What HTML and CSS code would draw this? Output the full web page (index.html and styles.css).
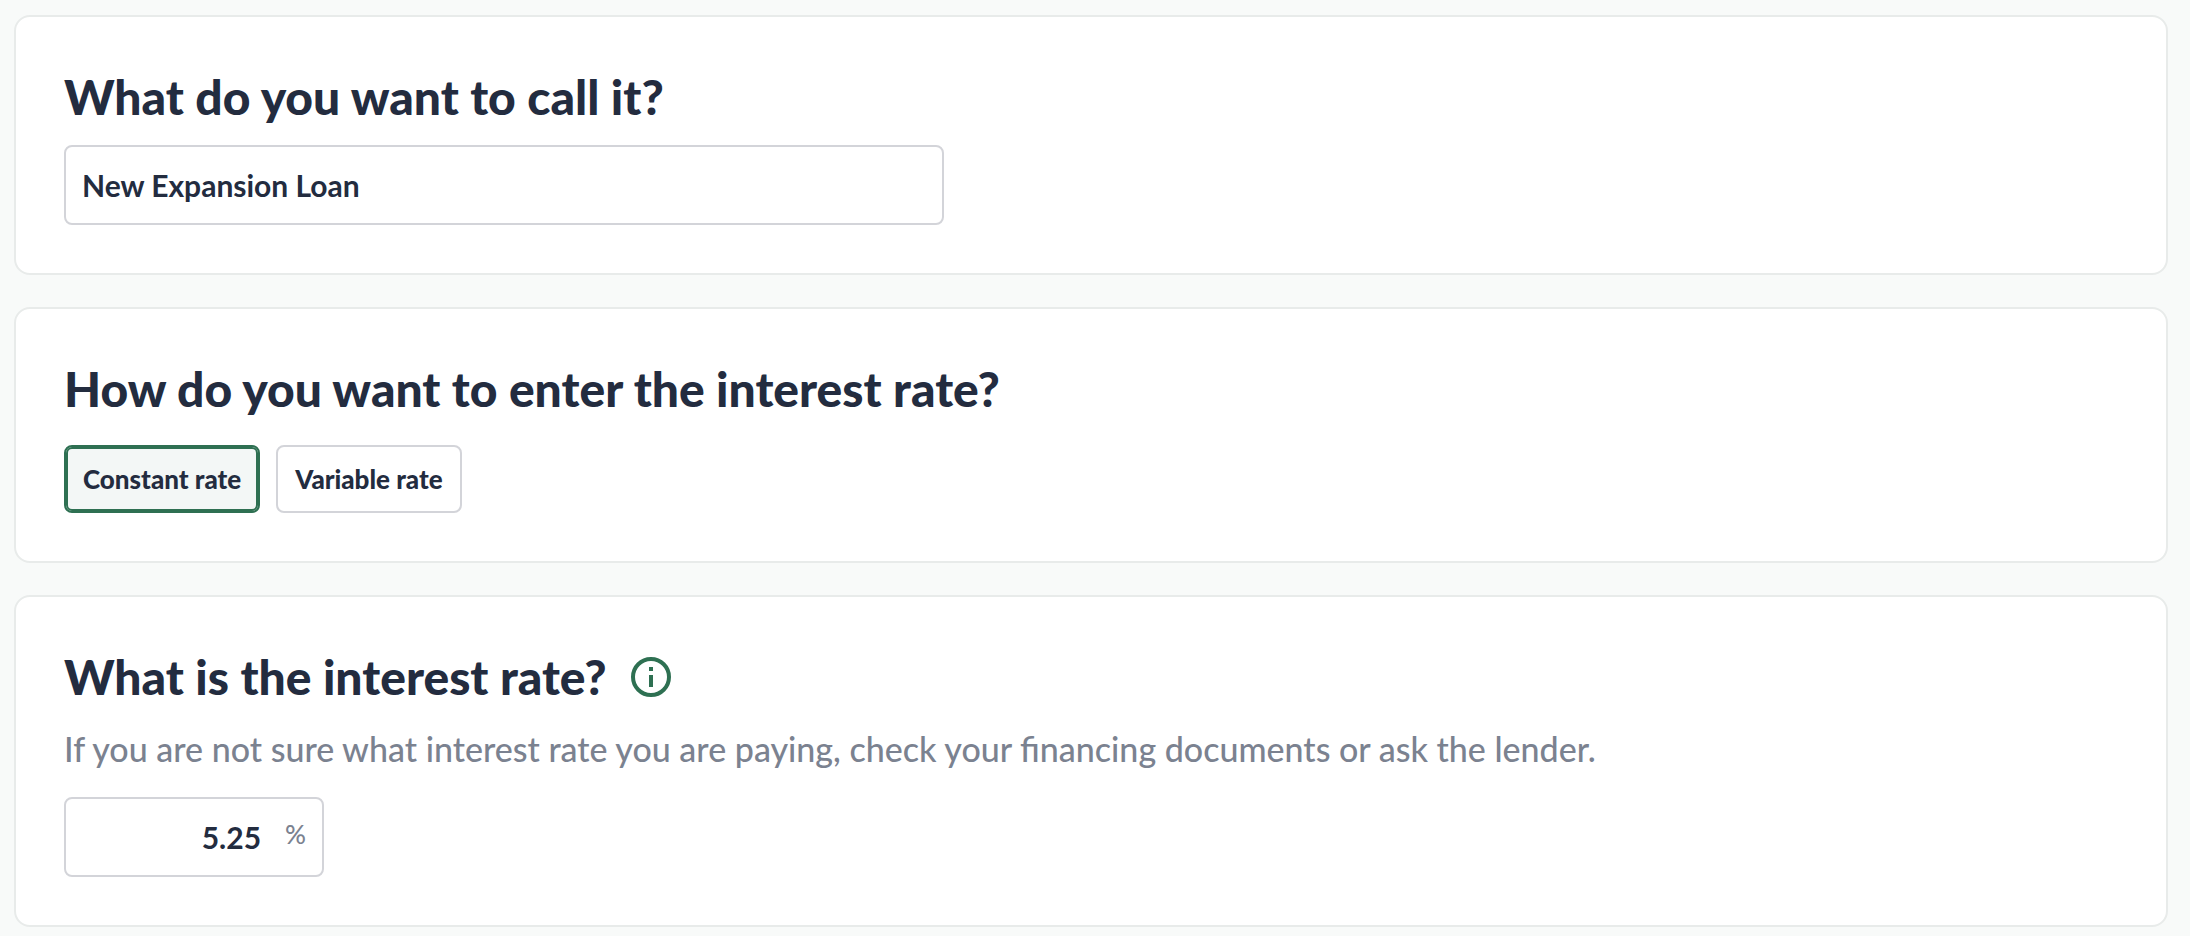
FILE: index.html
```html
<!DOCTYPE html>
<html lang="en">
<head>
  <meta charset="UTF-8">
  <title>New loan</title>
  <link rel="stylesheet" href="styles.css">
</head>
<body>
  <form class="questions">
    <section class="card">
      <h2><label for="loan_name">What do you want to call it?</label></h2>
      <input class="field name-field" id="loan_name" type="text" value="New Expansion Loan">
    </section>

    <section class="card">
      <h2 id="rate_type">How do you want to enter the interest rate?</h2>
      <div class="choices" role="group" aria-labelledby="rate_type">
        <button class="choice selected" type="button" aria-pressed="true">Constant rate</button>
        <button class="choice" type="button" aria-pressed="false">Variable rate</button>
      </div>
    </section>

    <section class="card">
      <div class="title-row">
        <h2><label for="rate">What is the interest rate?</label></h2>
        <button class="info" type="button" aria-label="More information">
          <svg viewBox="0 0 48 48" width="48" height="48" aria-hidden="true">
            <circle cx="24" cy="24" r="18" fill="none" stroke="currentColor" stroke-width="4"/>
            <path d="M22 14h4v4h-4zM22 22h4v12h-4z" fill="currentColor"/>
          </svg>
        </button>
      </div>
      <p class="hint" id="rate_hint">If you are not sure what interest rate you are paying, check your financing documents or ask the lender.</p>
      <div class="field rate-field">
        <input id="rate" type="text" inputmode="decimal" value="5.25" aria-describedby="rate_hint">
        <span class="unit">%</span>
      </div>
    </section>
  </form>
</body>
</html>
```
FILE: styles.css
```css
* {
  box-sizing: border-box;
}
body {
  margin: 0;
  background: #f8faf9;
  color: #232c3f;
  font-family: Lato, "Noto Sans", sans-serif;
}
.questions {
  display: flex;
  flex-direction: column;
  gap: 32px;
  padding: 15px 22px 9px 14px;
}
.card {
  padding: 48px;
  background: #fff;
  border: 2px solid #e8ebea;
  border-radius: 16px;
}
h2 {
  margin: 0 0 16px;
  font-size: 48px;
  line-height: 64px;
  font-weight: 900;
}
input,
button {
  font-family: inherit;
  color: inherit;
}

.field {
  display: block;
  width: 100%;
  height: 80px;
  padding: 0 16px;
  background: #fff;
  border: 2px solid #d3d4d9;
  border-radius: 8px;
  font-size: 30px;
  font-weight: 700;
}
.name-field {
  max-width: 880px;
}

.choices {
  display: flex;
  gap: 16px;
  margin-top: 24px;
}
.choice {
  height: 68px;
  padding: 0 17px;
  background: #fff;
  border: 2px solid #d3d4d9;
  border-radius: 8px;
  font-size: 26px;
  font-weight: 900;
}
.choice.selected {
  background: #f3f7f6;
  border-color: #2e7052;
  box-shadow: inset 0 0 0 2px #2e7052;
}

.title-row {
  display: flex;
  align-items: center;
  gap: 20px;
  margin-bottom: 16px;
}
.title-row h2 {
  margin: 0;
}
.info {
  display: flex;
  padding: 0;
  border: 0;
  background: none;
  color: #2e7052;
}
.hint {
  margin: 0 0 24px;
  color: #7b8290;
  font-size: 34px;
  line-height: 48px;
  font-weight: 500;
}
.rate-field {
  display: flex;
  align-items: center;
  gap: 24px;
  max-width: 260px;
}
.rate-field input {
  flex: 1;
  min-width: 0;
  padding: 0;
  border: 0;
  font-size: 30px;
  font-weight: 700;
  text-align: right;
}
.unit {
  padding-bottom: 6px;
  color: #7b8290;
  font-size: 26px;
  font-weight: 500;
}
```
